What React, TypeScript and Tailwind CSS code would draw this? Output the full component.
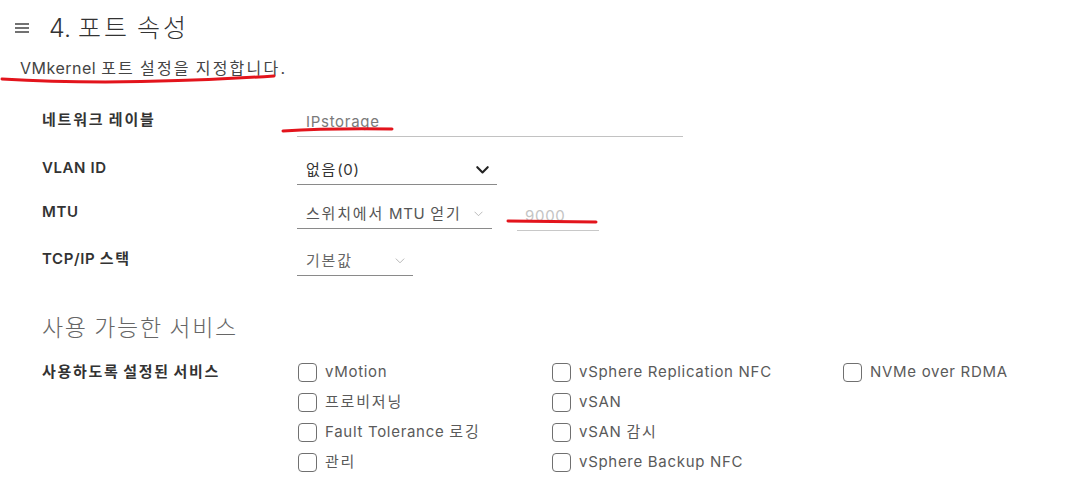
import React from "react";

const FONT = "font-['Inter','Noto_Sans_CJK_KR',sans-serif]";
const HANGUL = /([\uAC00-\uD7A3]+)/;

// Hangul runs get their own letter spacing so the Korean text keeps the reference's width
function T({ text, k }: { text: string; k: string }) {
  return (
    <span>
      {text.split(HANGUL).map((p, i) =>
        HANGUL.test(p) ? (
          <span key={i} className={k}>
            {p}
          </span>
        ) : (
          <React.Fragment key={i}>{p}</React.Fragment>
        )
      )}
    </span>
  );
}

function Chevron({ className }: { className: string }) {
  return (
    <svg viewBox="0 0 16 10" fill="none" stroke="currentColor" className={className}>
      <path d="M1.5 1.5 L8 8 L14.5 1.5" strokeLinecap="round" strokeLinejoin="round" />
    </svg>
  );
}

function FormRow({ label, className, children }: { label: string; className: string; children: React.ReactNode }) {
  return (
    <div className={`flex items-start ${className}`}>
      <div className="w-[297px] h-[25px] pl-[42px] flex items-center text-[15px] font-semibold text-[#333] tracking-[0.6px] whitespace-pre">
        <T text={label} k="tracking-[1.8px]" />
      </div>
      {children}
    </div>
  );
}

function Check({ label }: { label: string }) {
  return (
    <label className="flex items-center h-[30px]">
      <span className="w-[19px] h-[19px] rounded-[4px] border border-[#707070] bg-white shrink-0" />
      <span className="ml-[8px] text-[15px] text-[#5a5a5a] whitespace-nowrap tracking-[0.7px]">
        <T text={label} k="tracking-[1.8px]" />
      </span>
    </label>
  );
}

export default function App() {
  return (
    <div className={`relative w-[1082px] h-[504px] bg-white overflow-hidden ${FONT}`}>
      {/* header */}
      <div className="flex items-center h-[32px] mt-[12px] pl-[15px]">
        <svg viewBox="0 0 14 10" className="w-[14px] h-[10px] text-[#444]" stroke="currentColor" strokeWidth="1.5">
          <path d="M0 1h14M0 5h14M0 9h14" />
        </svg>
        <h1 className="ml-[20px] text-[25px] leading-[32px] font-light text-[#333] whitespace-pre">
          <T text="4. 포트 속성" k="tracking-[3px]" />
        </h1>
      </div>
      <p className="mt-[13px] pl-[20px] text-[16px] leading-[22px] text-[#444] tracking-[0.5px]">
        <T text="VMkernel 포트 설정을 지정합니다." k="tracking-[2.2px]" />
      </p>

      {/* port form */}
      <FormRow label="네트워크 레이블" className="mt-[29px]">
        <div className="w-[386px] h-[29px] border-b border-[#c2c2c2] flex items-center pl-[9px] text-[15px] text-[#7a7a7a] tracking-[0.7px]">
          IPstorage
        </div>
      </FormRow>
      <FormRow label="VLAN ID" className="mt-[19px]">
        <div className="w-[200px] h-[29px] border-b border-[#8a8a8a] flex items-center justify-between pl-[9px] pr-[8px] text-[15px] text-[#333] tracking-[0.7px]">
          <T text="없음(0)" k="tracking-[1.8px]" />
          <Chevron className="w-[13px] h-[8px] text-[#222] stroke-[2.6]" />
        </div>
      </FormRow>
      <FormRow label="MTU" className="mt-[15px]">
        <div className="w-[195px] h-[29px] border-b border-[#8a8a8a] flex items-center justify-between pl-[9px] pr-[9px] text-[15px] text-[#555] tracking-[0.7px] whitespace-pre">
          <T text="스위치에서 MTU 얻기" k="tracking-[1.8px]" />
          <Chevron className="w-[9px] h-[6px] text-[#aaa] stroke-[1.4]" />
        </div>
        <div className="ml-[25px] mt-[2px] w-[82px] h-[29px] border-b border-[#c8c8c8] flex items-center pl-[8px] text-[15px] text-[#c4c4c4] tracking-[0.7px]">
          9000
        </div>
      </FormRow>
      <FormRow label="TCP/IP 스택" className="mt-[16px]">
        <div className="w-[116px] h-[29px] border-b border-[#8a8a8a] flex items-center justify-between pl-[9px] pr-[8px] text-[15px] text-[#666]">
          <T text="기본값" k="tracking-[1.8px]" />
          <Chevron className="w-[10px] h-[6px] text-[#aaa] stroke-[1.4]" />
        </div>
      </FormRow>

      {/* services */}
      <h2 className="mt-[37px] pl-[42px] text-[23px] leading-[30px] font-light text-[#666]">
        <T text="사용 가능한 서비스" k="tracking-[1.7px]" />
      </h2>
      <div className="flex items-start mt-[14px]">
        <div className="w-[298px] h-[30px] pl-[42px] flex items-center text-[15px] font-semibold text-[#333] whitespace-pre">
          <T text="사용하도록 설정된 서비스" k="tracking-[1.7px]" />
        </div>
        <div className="w-[254px] flex flex-col">
          <Check label="vMotion" />
          <Check label="프로비저닝" />
          <Check label="Fault Tolerance 로깅" />
          <Check label="관리" />
        </div>
        <div className="w-[291px] flex flex-col">
          <Check label="vSphere Replication NFC" />
          <Check label="vSAN" />
          <Check label="vSAN 감시" />
          <Check label="vSphere Backup NFC" />
        </div>
        <div className="flex flex-col">
          <Check label="NVMe over RDMA" />
        </div>
      </div>

      {/* hand-drawn red annotations over the screenshot */}
      <svg className="absolute inset-0 pointer-events-none" width="1082" height="504" fill="none" stroke="#e3141c" strokeWidth="3" strokeLinecap="round">
        <path d="M2 79 Q 120 86 274 76" />
        <path d="M283 131 Q 330 128 392 129" />
        <path d="M508 221 L 596 222" />
      </svg>
    </div>
  );
}
